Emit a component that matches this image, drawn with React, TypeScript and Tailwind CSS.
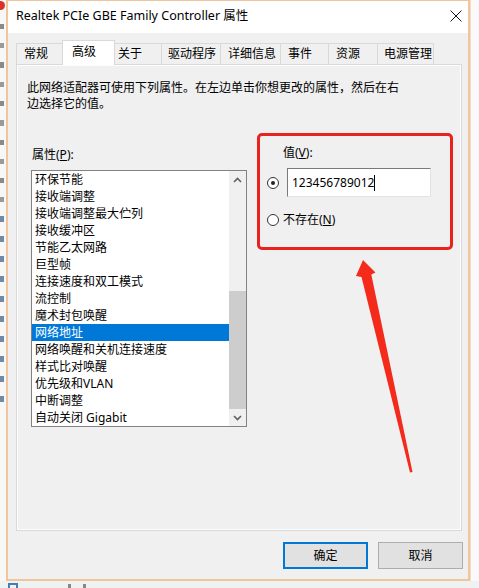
import React from 'react';

const TABS = [
  { label: '常规', w: 'w-[46px]', pl: 'pl-[7px]' },
  { label: '高级', w: 'w-[53px]', pl: 'pl-[9px]', active: true },
  { label: '关于', w: 'w-[46px]', pl: 'pl-[3px]' },
  { label: '驱动程序', w: 'w-[59px]', pl: 'pl-[6px]' },
  { label: '详细信息', w: 'w-[60px]', pl: 'pl-[7px]' },
  { label: '事件', w: 'w-[48px]', pl: 'pl-[7px]' },
  { label: '资源', w: 'w-[49px]', pl: 'pl-[7px]' },
  { label: '电源管理', w: 'w-[57px]', pl: 'pl-[6px]' },
];

const PROPS = [
  '环保节能',
  '接收端调整',
  '接收端调整最大伫列',
  '接收缓冲区',
  '节能乙太网路',
  '巨型帧',
  '连接速度和双工模式',
  '流控制',
  '魔术封包唤醒',
  '网络地址',
  '网络唤醒和关机连接速度',
  '样式比对唤醒',
  '优先级和VLAN',
  '中断调整',
  '自动关闭 Gigabit',
];

const Chevron = ({ up }: { up?: boolean }) => (
  <svg width="9" height="6" viewBox="0 0 9 6">
    <polyline
      points={up ? '1,5 4.5,1.5 8,5' : '1,1 4.5,4.5 8,1'}
      fill="none"
      stroke="#606060"
      strokeWidth="1.6"
    />
  </svg>
);

const Radio = ({ checked }: { checked?: boolean }) => (
  <span className="flex w-[12px] h-[12px] shrink-0 items-center justify-center rounded-full border border-[#333] bg-white">
    {checked && <span className="w-[4px] h-[4px] rounded-full bg-[#222]" />}
  </span>
);

export default function App() {
  return (
    <div className="relative w-[479px] h-[588px] overflow-hidden bg-[#f3f5f4] text-[12px] text-black font-['Noto_Sans','Noto_Sans_CJK_SC',sans-serif]">
      <div className="flex h-[581px]">
        {/* desktop edge on the left */}
        <div className="w-[6px] flex flex-col gap-[14px] pt-[1px] bg-[#f7f7f5]">
          <div className="w-[5px] h-[9px] rounded-r-full bg-[#d8322a]" />
          <div className="w-[4px] h-[5px] bg-[#8a8a8a]" />
          <div className="w-[4px] h-[5px] bg-[#9a9a9a]" />
          <div className="w-[4px] h-[6px] bg-[#8a8a8a]" />
          <div className="w-[4px] h-[5px] bg-[#9a9a9a]" />
          <div className="w-[4px] h-[5px] bg-[#8a8a8a]" />
          <div className="w-[4px] h-[6px] bg-[#9a9a9a]" />
          <div className="w-[4px] h-[5px] bg-[#8a8a8a]" />
          <div className="w-[4px] h-[5px] bg-[#9a9a9a]" />
          <div className="w-[4px] h-[5px] bg-[#8a8a8a]" />
          <div className="w-[4px] h-[5px] bg-[#9a9a9a]" />
          <div className="w-[4px] h-[6px] bg-[#6f8aa8]" />
          <div className="w-[4px] h-[6px] bg-[#6f8aa8]" />
          <div className="w-[4px] h-[6px] bg-[#6f8aa8]" />
          <div className="w-[4px] h-[6px] bg-[#6f8aa8]" />
          <div className="w-[4px] h-[6px] bg-[#6f8aa8]" />
          <div className="w-[4px] h-[6px] bg-[#6f8aa8]" />
          <div className="w-[4px] h-[6px] bg-[#6f8aa8]" />
          <div className="w-[4px] h-[6px] bg-[#6f8aa8]" />
          <div className="w-[4px] h-[6px] bg-[#6f8aa8]" />
          <div className="w-[4px] h-[6px] bg-[#6f8aa8]" />
        </div>

        {/* dialog window */}
        <div className="w-[464px] flex flex-col border-x-2 border-t border-b-2 border-[#f0c49c]">
          <div className="h-[32px] shrink-0 bg-white flex items-center justify-between pl-[8px] pr-[6px]">
            <span className="text-[12.5px] leading-[16px] -mt-[3px]">Realtek PCIe GBE Family Controller 属性</span>
            <svg width="12" height="12" viewBox="0 0 12 12" className="-mt-[3px]">
              <path d="M0.5 0.5 L11.5 11.5 M11.5 0.5 L0.5 11.5" stroke="#111" strokeWidth="1" />
            </svg>
          </div>

          <div className="flex-1 flex flex-col bg-[#f0f0f0] pt-[7px] pl-[8px] pr-[5px] pb-[10px]">
            {/* tabs */}
            <div className="flex items-end h-[24px]">
              {TABS.map((t, i) =>
                t.active ? (
                  <div
                    key={t.label}
                    className={`${t.w} ${t.pl} relative z-10 h-[25px] -mb-[1px] bg-white border-x border-t border-[#d9d9d9] leading-[22px]`}
                  >
                    {t.label}
                  </div>
                ) : (
                  <div
                    key={t.label}
                    className={`${t.w} ${t.pl} h-[21px] bg-[#f0f0f0] border-t border-[#d9d9d9] leading-[20px] ${
                      i === 2 ? '' : 'border-l'
                    } ${i === TABS.length - 1 ? 'border-r' : ''}`}
                  >
                    {t.label}
                  </div>
                )
              )}
            </div>

            {/* tab page */}
            <div className="h-[467px] mr-[1px] border border-[#d9d9d9] bg-[#f0f0f0] shadow-[inset_1px_1px_0_#fdfdfd,inset_-1px_-1px_0_#fdfdfd]">
              <div className="pt-[15px] pl-[10px] leading-[16px]">
                <div>此网络适配器可使用下列属性。在左边单击你想更改的属性，然后在右</div>
                <div>边选择它的值。</div>
              </div>

              <div className="flex mt-[33px] ml-[14px]">
                <div className="w-[216px] flex flex-col">
                  <div className="mt-[2px] pl-[1px] leading-[15px] h-[15px]">属性(<span className="underline">P</span>):</div>
                  <div className="mt-[8px] h-[257px] flex border border-[#828282] bg-white">
                    <div className="flex-1 flex flex-col">
                      {PROPS.map((p) => (
                        <div
                          key={p}
                          className={`h-[17px] pl-[3px] leading-[17px] whitespace-nowrap ${
                            p === '网络地址' ? 'bg-[#0078d7] text-white' : ''
                          }`}
                        >
                          {p}
                        </div>
                      ))}
                    </div>
                    <div className="w-[17px] flex flex-col bg-[#f0f0f0]">
                      <div className="h-[17px] flex items-center justify-center">
                        <Chevron up />
                      </div>
                      <div className="flex-1 flex flex-col justify-end">
                        <div className="h-[118px] bg-[#cdcdcd]" />
                      </div>
                      <div className="h-[17px] flex items-center justify-center">
                        <Chevron />
                      </div>
                    </div>
                  </div>
                </div>

                <div className="ml-[20px] flex flex-col">
                  <div className="pl-[16px] leading-[15px]">值(<span className="underline">V</span>):</div>
                  <div className="mt-[8px] h-[29px] flex items-center">
                    <Radio checked />
                    <div className="ml-[8px] w-[144px] h-[29px] flex items-center pl-[4px] bg-white border border-t-[#7a7a7a] border-l-[#7a7a7a] border-r-[#e3e3e3] border-b-[#e3e3e3]">
                      <span className="leading-[16px]">123456789012</span>
                      <span className="w-[1px] h-[16px] bg-black" />
                    </div>
                  </div>
                  <div className="mt-[15px] h-[16px] flex items-center gap-[4px]">
                    <Radio />
                    <span className="leading-[16px]">不存在(<span className="underline">N</span>)</span>
                  </div>
                </div>
              </div>
            </div>

            {/* buttons */}
            <div className="mt-[11px] flex justify-end gap-[10px]">
              <button className="w-[85px] h-[27px] border-2 border-[#0078d7] bg-[#e1e1e1] leading-[20px]">确定</button>
              <button className="w-[85px] h-[27px] border border-[#adadad] bg-[#e1e1e1] leading-[20px]">取消</button>
            </div>
          </div>
        </div>

        <div className="flex-1 bg-[#fafafa] border-l border-[#f6dcc6]" />
      </div>

      {/* desktop strip below */}
      <div className="h-[7px] flex items-end bg-[#eef2f0]">
        <div className="ml-[8px] w-[10px] h-[5px] border-t-2 border-x-2 border-[#4a7bb0]" />
        <div className="ml-[50px] w-[3px] h-[4px] bg-[#888]" />
        <div className="ml-[12px] w-[3px] h-[4px] bg-[#888]" />
      </div>

      {/* red annotation */}
      <div className="absolute left-[257px] top-[133px] w-[196px] h-[117px] border-[3px] border-[#e8231d] rounded-[5px]" />
      <svg className="absolute left-0 top-0" width="479" height="588" viewBox="0 0 479 588">
        <polygon
          points="363,260 375.5,272.5 371.3,274.5 412.5,472 410,472.5 361.5,277 356,276"
          fill="#f42a1a"
        />
      </svg>
    </div>
  );
}
